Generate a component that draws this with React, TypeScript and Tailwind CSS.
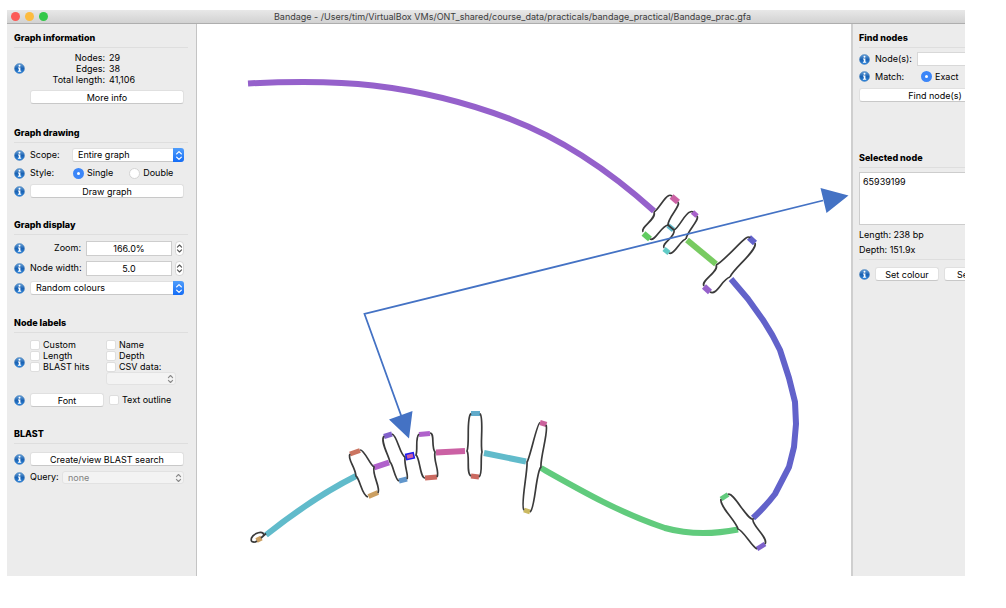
import React from "react";

const buttonBase =
  "rounded-[3px] border border-[#e0e0e0] border-b-[#c8c8c8] bg-white text-center leading-[11px] whitespace-nowrap";

function InfoIcon() {
  return (
    <svg viewBox="0 0 22 22" className="h-[11px] w-[11px] shrink-0" aria-hidden="true">
      <defs>
        <linearGradient id="info-fill" x1="0" y1="0" x2="0" y2="1">
          <stop offset="0" stopColor="#6aa3da" />
          <stop offset="0.5" stopColor="#1a62b3" />
          <stop offset="1" stopColor="#2b86e0" />
        </linearGradient>
      </defs>
      <circle cx="11" cy="11" r="10" fill="url(#info-fill)" stroke="#4a80b8" strokeWidth="1" />
      <circle cx="11" cy="5.6" r="2" fill="#fff" />
      <path d="M8 9h4.8v6.6H14.4v1.8H7.8v-1.8h1.8v-4.8H8z" fill="#fff" />
    </svg>
  );
}

function Chevrons({ className }: { className: string }) {
  return (
    <svg viewBox="0 0 10 14" fill="none" strokeWidth="1.6" strokeLinecap="round" strokeLinejoin="round" className={className} aria-hidden="true">
      <path d="M2 5l3-3 3 3M2 9l3 3 3-3" stroke="currentColor" />
    </svg>
  );
}

function Heading({ children }: { children: React.ReactNode }) {
  return (
    <h2 className="h-[18px] border-b border-[#dedede] text-[9px] leading-[16px] font-extrabold whitespace-nowrap">
      {children}
    </h2>
  );
}

function Row({ className, children }: { className: string; children: React.ReactNode }) {
  return (
    <div className={`flex items-center gap-[5px] pr-1 ${className}`}>
      <InfoIcon />
      {children}
    </div>
  );
}

function Select({ id, label, value, disabled, className }: { id: string; label?: string; value: string; disabled?: boolean; className: string }) {
  return (
    <div className={`relative ${className}`}>
      <select
        id={id}
        aria-label={label}
        disabled={disabled}
        className={
          disabled
            ? "block h-[13px] w-full appearance-none rounded-[3px] border border-[#e2e2e2] bg-[#f3f3f3] pl-[5px] leading-[11px] text-[#808080] opacity-100"
            : "block h-[14px] w-full appearance-none rounded-[3px] border border-[#e0e0e0] border-b-[#c8c8c8] bg-white pl-[5px] leading-[12px]"
        }
      >
        <option>{value}</option>
      </select>
      {disabled ? (
        <Chevrons className="pointer-events-none absolute top-[2px] right-[2px] h-[10px] w-[7px] text-[#8a8a8a]" />
      ) : (
        <span className="pointer-events-none absolute top-0 right-0 flex h-[14px] w-[11px] items-center justify-center rounded-r-[3px] bg-linear-to-b from-[#4f9dfb] to-[#136cf6] text-white">
          <Chevrons className="h-[11px] w-2" />
        </span>
      )}
    </div>
  );
}

function Stepper({ id, label, value }: { id: string; label: string; value: string }) {
  return (
    <Row className="h-5">
      <label htmlFor={id} className="w-[51px] text-right whitespace-nowrap">{label}</label>
      <input id={id} defaultValue={value} className="h-[15px] w-0 min-w-0 flex-1 border border-[#cdcdcd] bg-white text-center" />
      <button type="button" aria-label={`Step ${label}`} className="-ml-[2px] flex h-[15px] w-[9px] shrink-0 items-center justify-center rounded-[4px] border border-[#d8d8d8] bg-white text-[#555]">
        <Chevrons className="h-[11px] w-[7px]" />
      </button>
    </Row>
  );
}

function Radio({ name, label, checked }: { name: string; label: string; checked?: boolean }) {
  return (
    <label className="flex items-center gap-[3px]">
      <input
        type="radio"
        name={name}
        defaultChecked={checked}
        className="h-[11px] w-[11px] appearance-none rounded-full border border-[#d4d4d4] bg-white checked:border-4 checked:border-[#3c86f8]"
      />
      {label}
    </label>
  );
}

function Check({ label }: { label: string }) {
  return (
    <label className="flex h-[11px] items-center gap-[3px] whitespace-nowrap">
      <input type="checkbox" className="h-[10px] w-[10px] shrink-0 appearance-none rounded-[2px] border border-[#dedede] bg-white" />
      {label}
    </label>
  );
}

const segments: { color: string; d: string; w?: number }[] = [
  { color: "#9561cb", d: "M248 83.5C272 82 330 80 373 85.5C420 91 468 103 510 119C565 140 613 174 654 211" },
  { color: "#6262ca", d: "M731 279L748 299L763 320Q773 335 780 350L789 378L795 402L796 424L794 447L789 467L775 494Q765 507 753 518" },
  { color: "#61cb7d", d: "M541 468C580 490 620 513 665 528C690 535 715 534 738 529.5" },
  { color: "#61bbcb", d: "M266 535C290 516 320 494 356 476" },
  { color: "#78cb61", d: "M687 240L716 264" },
  { color: "#b061cb", d: "M374 467.5L389 462.5" },
  { color: "#cb61a4", d: "M436 452.5L465 451" },
  { color: "#61bbcb", d: "M484 453L526 461.5" },
  { color: "#cb61a4", d: "M671.5 196.5L678 202" },
  { color: "#61cb61", d: "M643.5 233.5L650 239" },
  { color: "#61bbcb", d: "M668 225.5L673.5 230", w: 5 },
  { color: "#a861cb", d: "M692.5 212L697 216", w: 5 },
  { color: "#61cbc6", d: "M664 249L669 253", w: 5 },
  { color: "#6262ca", d: "M749 237.5L755 243" },
  { color: "#9561cb", d: "M704 286.5L710 292" },
  { color: "#cb7561", d: "M350 454L360 450.5", w: 5 },
  { color: "#cb9f61", d: "M368.5 496.5L378 492.5", w: 5 },
  { color: "#8261cb", d: "M384 436.5L392 434", w: 5 },
  { color: "#6196cb", d: "M399 481L407 479", w: 5 },
  { color: "#b061cb", d: "M419 434.5L430 433.5", w: 5 },
  { color: "#cb6a61", d: "M425 478L437 477", w: 5 },
  { color: "#61abcb", d: "M471 413.5L480 413.5", w: 5 },
  { color: "#cb6a61", d: "M471 476L479 477", w: 5 },
  { color: "#cb619c", d: "M540 422.5L546.5 424.5", w: 5 },
  { color: "#cbb961", d: "M524 510L530 512", w: 5 },
  { color: "#61cb7d", d: "M721 499L728 494.5", w: 5 },
  { color: "#7d61cb", d: "M757 549L765 544", w: 5 },
  { color: "#cb9f61", d: "M256.5 540.5L261.5 538", w: 5 },
];

const links = [
  "M654 212C658 210 664 198 668 196Q670 194.500 672 196",
  "M678 202C681 206 668 217 668 225",
  "M654 212C657 219 640 227 643 232",
  "M650 239C655 242 661 226 668 225L674 230",
  "M674 230C679 228 685 213 690 212Q692 211 693 212",
  "M697 216C700 220 687 231 686 239",
  "M674 230C676 237 661 243 664 248",
  "M669 253C674 256 681 239 686 239",
  "M716 265C721 264 741 241 746 238Q749 236 750 238",
  "M755 243C758 250 733 269 730 277",
  "M716 265C720 271 700 281 704 286",
  "M710 292C717 296 722 279 730 277",
  "M350 454C347 459 355 466 356 476C360 479 362 496 368 497",
  "M360 450C364 449 370 465 374 467C372 475 381 488 378 493",
  "M384 436C380 441 388 454 390 462C393 464 395 480 399 481",
  "M392 434C397 435 400 455 405 457C404 466 409 476 407 479",
  "M419 434C415 438 418 449 416 455C420 458 420 478 425 478",
  "M430 433C435 433 431 447 435 452C433 460 440 472 437 477",
  "M471 413.500C466 418 470 443 467 451C470 455 466 474 471 476",
  "M480 413.500C484 418 480 444 482 452C480 458 483 475 479 477",
  "M540 422.500C537 423 530 458 527 462C528 470 520 507 524 510",
  "M546 425C549 430 540 458 541 467C536 471 535 510 530 512",
  "M721 499C719 506 736 521 738 529C743 530 752 547 757 549",
  "M728 494.500C733 491 747 520 753 519C751 525 769 538 765 544",
  "M264 535C263 530 254 533 251.500 538C250 543 255 542.500 257 541M261 538L266 533.500",
];

function GraphCanvas() {
  return (
    <svg viewBox="197 24 654 552" role="img" aria-label="Assembly graph" className="block w-full">
      <g fill="none">
        {segments.map((s) => (
          <path key={s.d} d={s.d} stroke={s.color} strokeWidth={s.w ?? 6} strokeLinejoin="round" />
        ))}
        {links.map((d) => (
          <path key={d} d={d} stroke="#3a3a3a" strokeWidth="1.7" />
        ))}
        <path d="M405.500 457.200L414.500 455.200" stroke="#1b1bf0" strokeWidth="7" />
        <path d="M407 456.900L413 455.500" stroke="#cb61a4" strokeWidth="4" />
      </g>
      <path d="M823 200.500L364.500 314L402 418" fill="none" stroke="#4472c4" strokeWidth="1.8" />
      <path d="M820.500 188L848.500 195.500L826.500 213ZM389 419.500L412.500 411L409 438.500Z" fill="#4472c4" />
    </svg>
  );
}

function LeftPanel() {
  return (
    <aside className="w-[190px] shrink-0 border-r border-[#c4c4c4] bg-[#ececec] pt-[6px] pr-2 pl-[7px]">
      <section className="pb-[21px]">
        <Heading>Graph information</Heading>
        <Row className="mt-1">
          <dl className="grid grid-cols-[75px_1fr] gap-x-1 leading-[11px] whitespace-nowrap">
            <dt className="text-right">Nodes:</dt>
            <dd>29</dd>
            <dt className="text-right">Edges:</dt>
            <dd>38</dd>
            <dt className="text-right">Total length:</dt>
            <dd>41,106</dd>
          </dl>
        </Row>
        <div className="mt-[5px] flex pr-1 pl-4">
          <button type="button" className={`h-[14px] flex-1 ${buttonBase}`}>More info</button>
        </div>
      </section>

      <section className="pb-[17px]">
        <Heading>Graph drawing</Heading>
        <Row className="mt-[3px] h-[18px]">
          <label htmlFor="scope" className="w-[37px]">Scope:</label>
          <Select id="scope" value="Entire graph" className="flex-1" />
        </Row>
        <Row className="h-[18px]">
          <span className="w-[38px]">Style:</span>
          <div className="flex gap-4">
            <Radio name="style" label="Single" checked />
            <Radio name="style" label="Double" />
          </div>
        </Row>
        <Row className="h-[18px]">
          <button type="button" className={`h-[14px] flex-1 ${buttonBase}`}>Draw graph</button>
        </Row>
      </section>

      <section className="pb-[17px]">
        <Heading>Graph display</Heading>
        <div className="mt-[3px]">
          <Stepper id="zoom" label="Zoom:" value="166.0%" />
          <Stepper id="node-width" label="Node width:" value="5.0" />
          <Row className="h-5">
            <Select id="colours" label="Colour scheme" value="Random colours" className="flex-1" />
          </Row>
        </div>
      </section>

      <section className="pb-[17px]">
        <Heading>Node labels</Heading>
        <Row className="mt-[6px]">
          <div className="grid flex-1 grid-cols-[76px_1fr] leading-[11px]">
            <div>
              <Check label="Custom" />
              <Check label="Length" />
              <Check label="BLAST hits" />
            </div>
            <div>
              <Check label="Name" />
              <Check label="Depth" />
              <Check label="CSV data:" />
              <Select id="csv" label="CSV column" value="" disabled className="mr-2" />
            </div>
          </div>
        </Row>
        <Row className="mt-[6px] h-[18px]">
          <button type="button" className={`h-[14px] w-[74px] ${buttonBase}`}>Font</button>
          <Check label="Text outline" />
        </Row>
      </section>

      <section>
        <Heading>BLAST</Heading>
        <Row className="mt-[6px] h-[18px]">
          <button type="button" className={`h-[14px] flex-1 ${buttonBase}`}>Create/view BLAST search</button>
        </Row>
        <Row className="h-[18px]">
          <label htmlFor="query" className="w-[27px] whitespace-nowrap">Query:</label>
          <Select id="query" value="none" disabled className="flex-1" />
        </Row>
      </section>
    </aside>
  );
}

function RightPanel() {
  return (
    <aside className="w-[114px] shrink-0 overflow-hidden border-l-2 border-[#cfcfcf] bg-[#ececec] pt-[6px] pl-[6px]">
      <section className="pb-12">
        <Heading>Find nodes</Heading>
        <Row className="mt-[2px] h-[18px]">
          <label htmlFor="nodes" className="w-[42px] whitespace-nowrap">Node(s):</label>
          <input id="nodes" className="h-[14px] w-20 shrink-0 border border-[#d8d8d8] bg-white" />
        </Row>
        <Row className="h-[17px]">
          <span className="w-[41px]">Match:</span>
          <Radio name="match" label="Exact" checked />
        </Row>
        <button type="button" className={`mt-[3px] block h-[14px] w-[152px] ${buttonBase}`}>Find node(s)</button>
      </section>

      <section>
        <Heading>Selected node</Heading>
        <textarea
          aria-label="Selected node"
          defaultValue="65939199"
          className="mt-1 block h-[53px] w-[152px] resize-none overflow-hidden border border-[#cdcdcd] bg-white px-[3px] py-[2px] leading-[13px]"
        />
        <p className="mt-[2px] leading-[15px]">Length: 238 bp</p>
        <p className="h-[18px] border-b border-[#dedede] leading-[15px]">Depth: 151.9x</p>
        <Row className="mt-[5px] h-[18px]">
          <button type="button" className={`h-[14px] w-16 shrink-0 ${buttonBase}`}>Set colour</button>
          <button type="button" className={`h-[14px] shrink-0 px-3 ${buttonBase}`}>Set label</button>
        </Row>
      </section>
    </aside>
  );
}

export default function App() {
  return (
    <div className="min-h-screen bg-white pt-[10px] pr-[41px] pl-[7px] font-['Inter',sans-serif] text-[9px] text-black">
      <header className="flex h-[14px] items-center border-b border-[#aeaeae] bg-linear-to-b from-[#e8e8e8] to-[#d2d2d2]">
        <div className="flex w-[53px] shrink-0 gap-[5px] pl-1">
          <span className="h-[9px] w-[9px] rounded-full bg-[#fc5b57]" />
          <span className="h-[9px] w-[9px] rounded-full bg-[#fdbc40]" />
          <span className="h-[9px] w-[9px] rounded-full bg-[#34c84a]" />
        </div>
        <h1 className="flex-1 text-center whitespace-nowrap text-[#3c3c3c]">
          Bandage - /Users/tim/VirtualBox VMs/ONT_shared/course_data/practicals/bandage_practical/Bandage_prac.gfa
        </h1>
      </header>
      <div className="flex">
        <LeftPanel />
        <main className="min-w-0 flex-1 bg-white">
          <GraphCanvas />
        </main>
        <RightPanel />
      </div>
    </div>
  );
}
